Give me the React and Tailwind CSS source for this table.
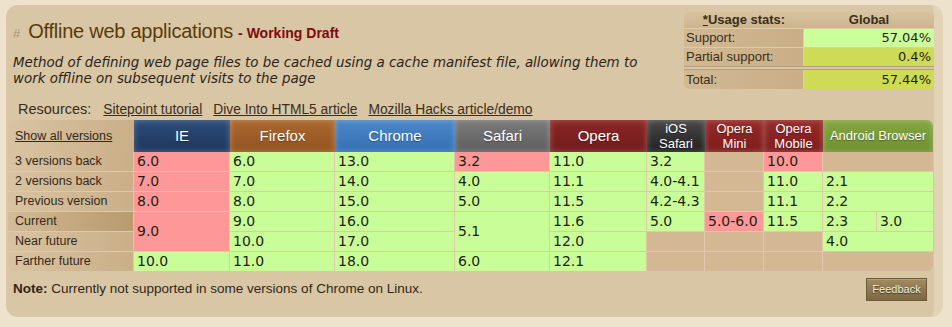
const sans = "font-['Liberation_Sans',Arial,sans-serif]";
const mono = "font-['DejaVu_Sans',Verdana,sans-serif]";

const heads = [
  { name: "IE", cls: "from-[#2D4C78] to-[#1D375D]" },
  { name: "Firefox", cls: "from-[#AB6830] to-[#92531F]" },
  { name: "Chrome", cls: "from-[#4B86C8] to-[#3570B3]" },
  { name: "Safari", cls: "from-[#7A7A7A] to-[#5E5E5E]" },
  { name: "Opera", cls: "from-[#8B2727] to-[#721A1A]" },
  { name: ["iOS", "Safari"], cls: "from-[#4A4A4A] to-[#202020]" },
  { name: ["Opera", "Mini"], cls: "from-[#982A2A] to-[#7D1C1C]" },
  { name: ["Opera", "Mobile"], cls: "from-[#982A2A] to-[#7D1C1C]" },
  { name: "Android Browser", cls: "from-[#84A541] to-[#6E902E] rounded-tr-[6px]", small: true },
];

const G = "bg-[#C9FD98]";
const R = "bg-[#FE9898]";
const T = "bg-[#D3B893]";

function Cell({ c, v, span }) {
  return (
    <div className={`${c} ${span || ""} ${mono} text-[14px] leading-[19px] text-[#1E1E14] pl-[3px] flex items-center`}>
      {v}
    </div>
  );
}

function Label({ children, current }) {
  return (
    <div
      className={`${sans} text-[12.5px] text-[#33281A] pl-[7px] flex items-center bg-linear-to-r ${
        current ? "from-[#D3BC98] via-[#C5A97F] to-[#B89C70]" : "from-[#D8C3A1] to-[#CAAF88]"
      }`}
    >
      {children}
    </div>
  );
}

function Stat({ label, value, bg, top }) {
  return (
    <div className={`flex ${top}`}>
      <div className={`w-[120px] ${sans} text-[13px] text-[#3A2E1C] pl-[2px] flex items-center bg-linear-to-r from-[#D2B993] to-[#C9AE87] border-r border-[#DDCBAB]`}>
        {label}
      </div>
      <div className={`flex-1 ${bg} ${mono} text-[13px] text-[#1E1E14] pr-[3px] flex items-center justify-end`}>
        {value}
      </div>
    </div>
  );
}

export default function App() {
  return (
    <div className="min-h-[327px] bg-[#EDE2CC] pl-[6px] pt-[5px]">
      <div className="w-[937px] h-[312px] rounded-[12px] bg-[#D9C6A5] border-r-[9px] border-[#E2D2B6] pl-[2px] pt-[7px] flex flex-col">
        <div className="flex justify-between">
          <div className="pl-[5px] pt-[4px]">
            <div className="h-[24px] flex items-baseline">
              <span className={`${sans} text-[13px] text-[#A3947B] mr-[8px]`}>#</span>
              <span className={`${sans} text-[20px] tracking-[-0.25px] text-[#5A3A0B]`}>Offline web applications</span>
              <span className={`${sans} text-[14px] font-bold text-[#7E0B0B] ml-[5px]`}>- Working Draft</span>
            </div>
            <p className={`${mono} italic text-[13.4px] leading-[16px] text-[#2A2418] mt-[15px] w-[670px]`}>
              Method of defining web page files to be cached using a cache manifest file, allowing them to
              <br />
              work offline on subsequent visits to the page
            </p>
          </div>
          <div className="w-[250px] rounded-[5px] overflow-hidden flex flex-col">
            <div className="flex h-[16px] bg-linear-to-b from-[#D8C3A0] to-[#CDB48E]">
              <div className={`w-[120px] ${sans} text-[13px] font-bold text-[#3A2E1C] text-center leading-[16px]`}>
                <span className="underline">*</span>Usage stats:
              </div>
              <div className={`flex-1 ${sans} text-[13px] font-bold text-[#3A2E1C] text-center leading-[16px]`}>Global</div>
            </div>
            <Stat label="Support:" value="57.04%" bg="bg-[#CCFE9A]" top="h-[19px] border-t border-[#DDCBAB]" />
            <Stat label="Partial support:" value="0.4%" bg="bg-[#CEDB57]" top="h-[19px] border-t border-[#DDCBAB]" />
            <Stat label="Total:" value="57.44%" bg="bg-[#CEDB57]" top="h-[23px] border-t-[4px] border-double border-[#B59E7A]" />
          </div>
        </div>

        <div className={`mt-[13px] pl-[10px] flex items-center h-[16px] ${sans} text-[#3A2E1C]`}>
          <span className="text-[14.5px] mr-[12px]">Resources:</span>
          <a className="text-[13.8px] underline mr-[11px]">Sitepoint tutorial</a>
          <a className="text-[13.8px] underline mr-[11px]">Dive Into HTML5 article</a>
          <a className="text-[13.8px] underline">Mozilla Hacks article/demo</a>
        </div>

        <div className="mt-[2px] w-[925px]">
          <div className="grid grid-cols-[126px_96px_105px_120px_95px_97px_58px_59px_59px_110px] h-[32px]">
            <div className={`${sans} text-[12.5px] text-[#33281A] pl-[7px] flex items-center rounded-tl-[5px] bg-linear-to-r from-[#D8C3A1] to-[#CAAF88]`}>
              <span className="underline">Show all versions</span>
            </div>
            {heads.map((h, i) => (
              <div
                key={i}
                className={`bg-linear-to-b ${h.cls} shadow-[inset_0_0_6px_rgba(255,255,255,0.28)] flex flex-col items-center justify-center text-white ${sans} [text-shadow:0_1px_1px_rgba(0,0,0,0.35)] ${
                  Array.isArray(h.name) ? "text-[13px] leading-[15px]" : h.small ? "text-[13px]" : "text-[15px]"
                }`}
              >
                {Array.isArray(h.name) ? (
                  <>
                    <span>{h.name[0]}</span>
                    <span>{h.name[1]}</span>
                  </>
                ) : (
                  h.name
                )}
              </div>
            ))}
          </div>

          <div className="grid grid-cols-[125px_95px_104px_119px_94px_96px_57px_58px_58px_53px_56px] grid-rows-[repeat(6,19px)] gap-px bg-[#E3C7AB] rounded-b-[6px] overflow-hidden">
            <Label>3 versions back</Label>
            <Cell c={R} v="6.0" />
            <Cell c={G} v="6.0" />
            <Cell c={G} v="13.0" />
            <Cell c={R} v="3.2" />
            <Cell c={G} v="11.0" />
            <Cell c={G} v="3.2" />
            <Cell c={T} />
            <Cell c={R} v="10.0" />
            <Cell c={T} span="col-span-2" />

            <Label>2 versions back</Label>
            <Cell c={R} v="7.0" />
            <Cell c={G} v="7.0" />
            <Cell c={G} v="14.0" />
            <Cell c={G} v="4.0" />
            <Cell c={G} v="11.1" />
            <Cell c={G} v="4.0-4.1" />
            <Cell c={T} />
            <Cell c={G} v="11.0" />
            <Cell c={G} v="2.1" span="col-span-2" />

            <Label>Previous version</Label>
            <Cell c={R} v="8.0" />
            <Cell c={G} v="8.0" />
            <Cell c={G} v="15.0" />
            <Cell c={G} v="5.0" />
            <Cell c={G} v="11.5" />
            <Cell c={G} v="4.2-4.3" />
            <Cell c={T} />
            <Cell c={G} v="11.1" />
            <Cell c={G} v="2.2" span="col-span-2" />

            <Label current>Current</Label>
            <Cell c={R} v="9.0" span="row-span-2" />
            <Cell c={G} v="9.0" />
            <Cell c={G} v="16.0" />
            <Cell c={G} v="5.1" span="row-span-2" />
            <Cell c={G} v="11.6" />
            <Cell c={G} v="5.0" />
            <Cell c={R} v="5.0-6.0" />
            <Cell c={G} v="11.5" />
            <Cell c={G} v="2.3" />
            <Cell c={G} v="3.0" />

            <Label>Near future</Label>
            <Cell c={G} v="10.0" />
            <Cell c={G} v="17.0" />
            <Cell c={G} v="12.0" />
            <Cell c={T} />
            <Cell c={T} />
            <Cell c={T} />
            <Cell c={G} v="4.0" span="col-span-2" />

            <Label>Farther future</Label>
            <Cell c={G} v="10.0" />
            <Cell c={G} v="11.0" />
            <Cell c={G} v="18.0" />
            <Cell c={G} v="6.0" />
            <Cell c={G} v="12.1" />
            <Cell c={T} />
            <Cell c={T} />
            <Cell c={T} />
            <Cell c={T} span="col-span-2" />
          </div>
        </div>

        <div className="mt-[7px] w-[925px] flex items-center justify-between pl-[5px] pr-[6px]">
          <p className={`${sans} text-[13.5px] text-[#2F2618]`}>
            <b>Note:</b> Currently not supported in some versions of Chrome on Linux.
          </p>
          <button className={`w-[61px] h-[23px] border border-[#6C5A38] bg-linear-to-b from-[#A08B60] to-[#7C6842] text-[#F2EDE2] ${sans} text-[11px] [text-shadow:0_1px_1px_rgba(0,0,0,0.6)] shadow-[inset_0_1px_0_rgba(255,255,255,0.2)]`}>
            Feedback
          </button>
        </div>
      </div>
    </div>
  );
}
